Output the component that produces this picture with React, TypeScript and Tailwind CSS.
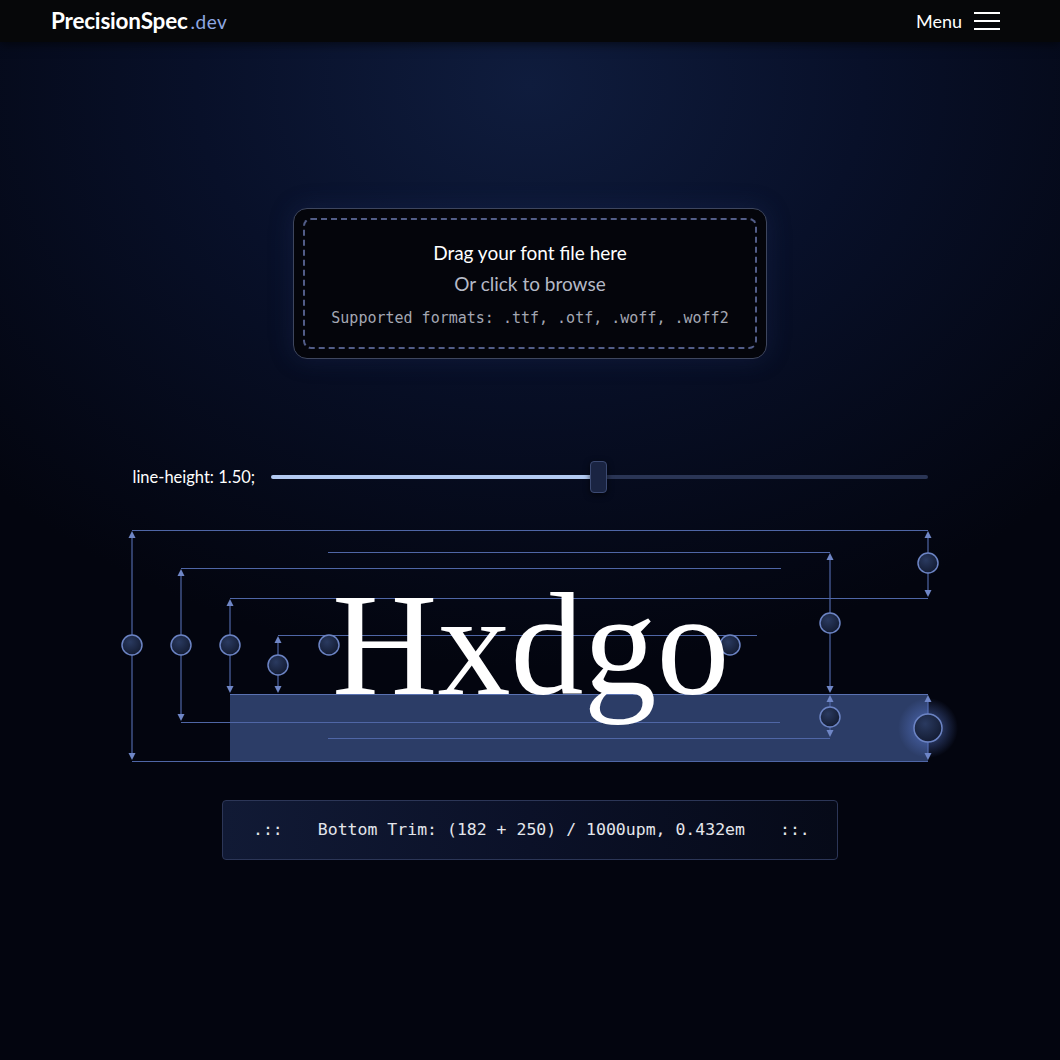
import React from 'react';

const LINE = '#4f66a6';

type VLine = { x: number; y1: number; y2: number; cy: number; big?: boolean };

const verticals: VLine[] = [
  { x: 132, y1: 530, y2: 761, cy: 645 },
  { x: 181, y1: 568, y2: 722, cy: 645 },
  { x: 230, y1: 598, y2: 694, cy: 645 },
  { x: 278, y1: 635, y2: 694, cy: 665 },
  { x: 830, y1: 552, y2: 694, cy: 623 },
  { x: 830, y1: 694, y2: 738, cy: 717 },
  { x: 928, y1: 530, y2: 598, cy: 563 },
  { x: 928, y1: 694, y2: 761, cy: 728, big: true },
];

const horizontals: [number, number, number][] = [
  [530, 132, 928],
  [552, 328, 830],
  [568, 181, 781],
  [598, 230, 928],
  [635, 278, 757],
  [722, 181, 780],
  [738, 328, 830],
  [761, 132, 928],
];

const Handle: React.FC<{ cx: number; cy: number; r?: number }> = ({ cx, cy, r = 10 }) => (
  <circle cx={cx} cy={cy} r={r} fill="url(#knob)" stroke="#6c84c4" strokeWidth={1.5} />
);

// drawn in page coordinates: the svg spans x 100..960, y 520..775
const MetricsDiagram: React.FC = () => (
  <svg width={860} height={255} viewBox="100 520 860 255" className="block">
    <defs>
      <radialGradient id="knob" cx="40%" cy="35%" r="70%">
        <stop offset="0%" stopColor="#2a3a60" />
        <stop offset="100%" stopColor="#121a30" />
      </radialGradient>
      <radialGradient id="glow">
        <stop offset="0%" stopColor="#5d7ed8" stopOpacity={0.7} />
        <stop offset="100%" stopColor="#5d7ed8" stopOpacity={0} />
      </radialGradient>
    </defs>

    <rect x={230} y={694} width={698} height={67} fill="#2c3d67" />
    <line x1={230} y1={694.5} x2={928} y2={694.5} stroke="#5a72b2" strokeWidth={1.2} />

    {horizontals.map(([y, x1, x2]) => (
      <line key={`${y}-${x1}`} x1={x1} y1={y + 0.5} x2={x2} y2={y + 0.5} stroke={LINE} strokeWidth={1.2} />
    ))}

    {verticals.map((v) => (
      <g key={`${v.x}-${v.y1}`}>
        <line x1={v.x} y1={v.y1 + 4} x2={v.x} y2={v.y2 - 4} stroke={LINE} strokeWidth={1.2} />
        <polygon points={`${v.x - 3.5},${v.y1 + 8} ${v.x + 3.5},${v.y1 + 8} ${v.x},${v.y1 + 1}`} fill="#6f86c6" />
        <polygon points={`${v.x - 3.5},${v.y2 - 8} ${v.x + 3.5},${v.y2 - 8} ${v.x},${v.y2 - 1}`} fill="#6f86c6" />
        {v.big && <circle cx={v.x} cy={v.cy} r={30} fill="url(#glow)" />}
        <Handle cx={v.x} cy={v.cy} r={v.big ? 14 : 10} />
      </g>
    ))}

    <Handle cx={329} cy={645} />
    <Handle cx={730} cy={645} />

    <text
      x={332}
      y={694}
      fill="#ffffff"
      fontSize={146}
      style={{ fontFamily: '"Liberation Serif", "DejaVu Serif", serif' }}
    >
      Hxdgo
    </text>
  </svg>
);

export default function App() {
  return (
    <div
      className="min-h-[1060px] w-full text-white"
      style={{ fontFamily: 'Lato, "Noto Sans", sans-serif' }}
    >
      <div className="min-h-[1060px] bg-[radial-gradient(ellipse_70%_55%_at_50%_8%,#0f1c3d_0%,#081029_45%,#03050f_100%)]">
        <header className="flex h-[42px] items-center justify-between bg-[#060709] pl-[51px] pr-[60px] shadow-[0_2px_10px_rgba(0,0,0,0.6)]">
          <div className="flex items-baseline">
            <span className="text-[22.5px] font-bold tracking-[-0.2px] text-white">PrecisionSpec</span>
            <span className="ml-[3px] text-[19px] tracking-[0.5px] text-[#8ea7e2]">.dev</span>
          </div>
          <button className="flex items-center gap-[12px] text-[18px] text-white">
            Menu
            <span className="flex w-[26px] flex-col gap-[6px]">
              <span className="h-[2px] bg-white" />
              <span className="h-[2px] bg-white" />
              <span className="h-[2px] bg-white" />
            </span>
          </button>
        </header>

        <div className="mt-[166px] flex justify-center">
          <div className="w-[474px] rounded-[14px] border-[1.5px] border-[#3e465e] bg-[#04050b] p-[9px] shadow-[0_0_24px_rgba(40,60,120,0.25)]">
            <div className="flex h-[131px] flex-col items-center justify-center rounded-[8px] border-2 border-dashed border-[#525d88]">
              <p className="text-[19px] leading-[26px] text-white">Drag your font file here</p>
              <p className="mt-[5px] text-[19px] leading-[26px] text-[#b5b9c6]">Or click to browse</p>
              <p
                className="mt-[11px] text-[15px] leading-[20px] text-[#a4a8b4]"
                style={{ fontFamily: '"DejaVu Sans Mono", "Liberation Mono", monospace' }}
              >
                Supported formats: .ttf, .otf, .woff, .woff2
              </p>
            </div>
          </div>
        </div>

        <div className="mx-auto mt-[102px] flex w-[795px] items-center">
          <span className="w-[138px] shrink-0 text-[16.5px] text-white">line-height: 1.50;</span>
          <div className="relative h-[32px] flex-1">
            <div className="absolute left-0 right-0 top-[14px] flex h-[4px] overflow-hidden rounded-full">
              <div className="w-[327px] bg-[#b3caf2]" />
              <div className="flex-1 bg-[#2a3555]" />
            </div>
            <div className="absolute left-[319px] top-0 h-[32px] w-[17px] rounded-[4px] border border-[#3c4a72] bg-[#1a2442] shadow-[0_2px_6px_rgba(0,0,0,0.6)]" />
          </div>
        </div>

        <div className="mt-[27px] flex justify-center">
          <MetricsDiagram />
        </div>

        <div className="mt-[25px] flex justify-center">
          <div
            className="flex h-[60px] w-[616px] items-center gap-[35px] rounded-[4px] border border-[#2c3657] bg-[linear-gradient(90deg,#111a35_0%,#0b1128_50%,#060a18_100%)] pl-[30px] text-[16.5px] text-[#e4e6ec]"
            style={{ fontFamily: '"DejaVu Sans Mono", "Liberation Mono", monospace' }}
          >
            <span>.::</span>
            <span>Bottom Trim: (182 + 250) / 1000upm, 0.432em</span>
            <span>::.</span>
          </div>
        </div>
      </div>
    </div>
  );
}
